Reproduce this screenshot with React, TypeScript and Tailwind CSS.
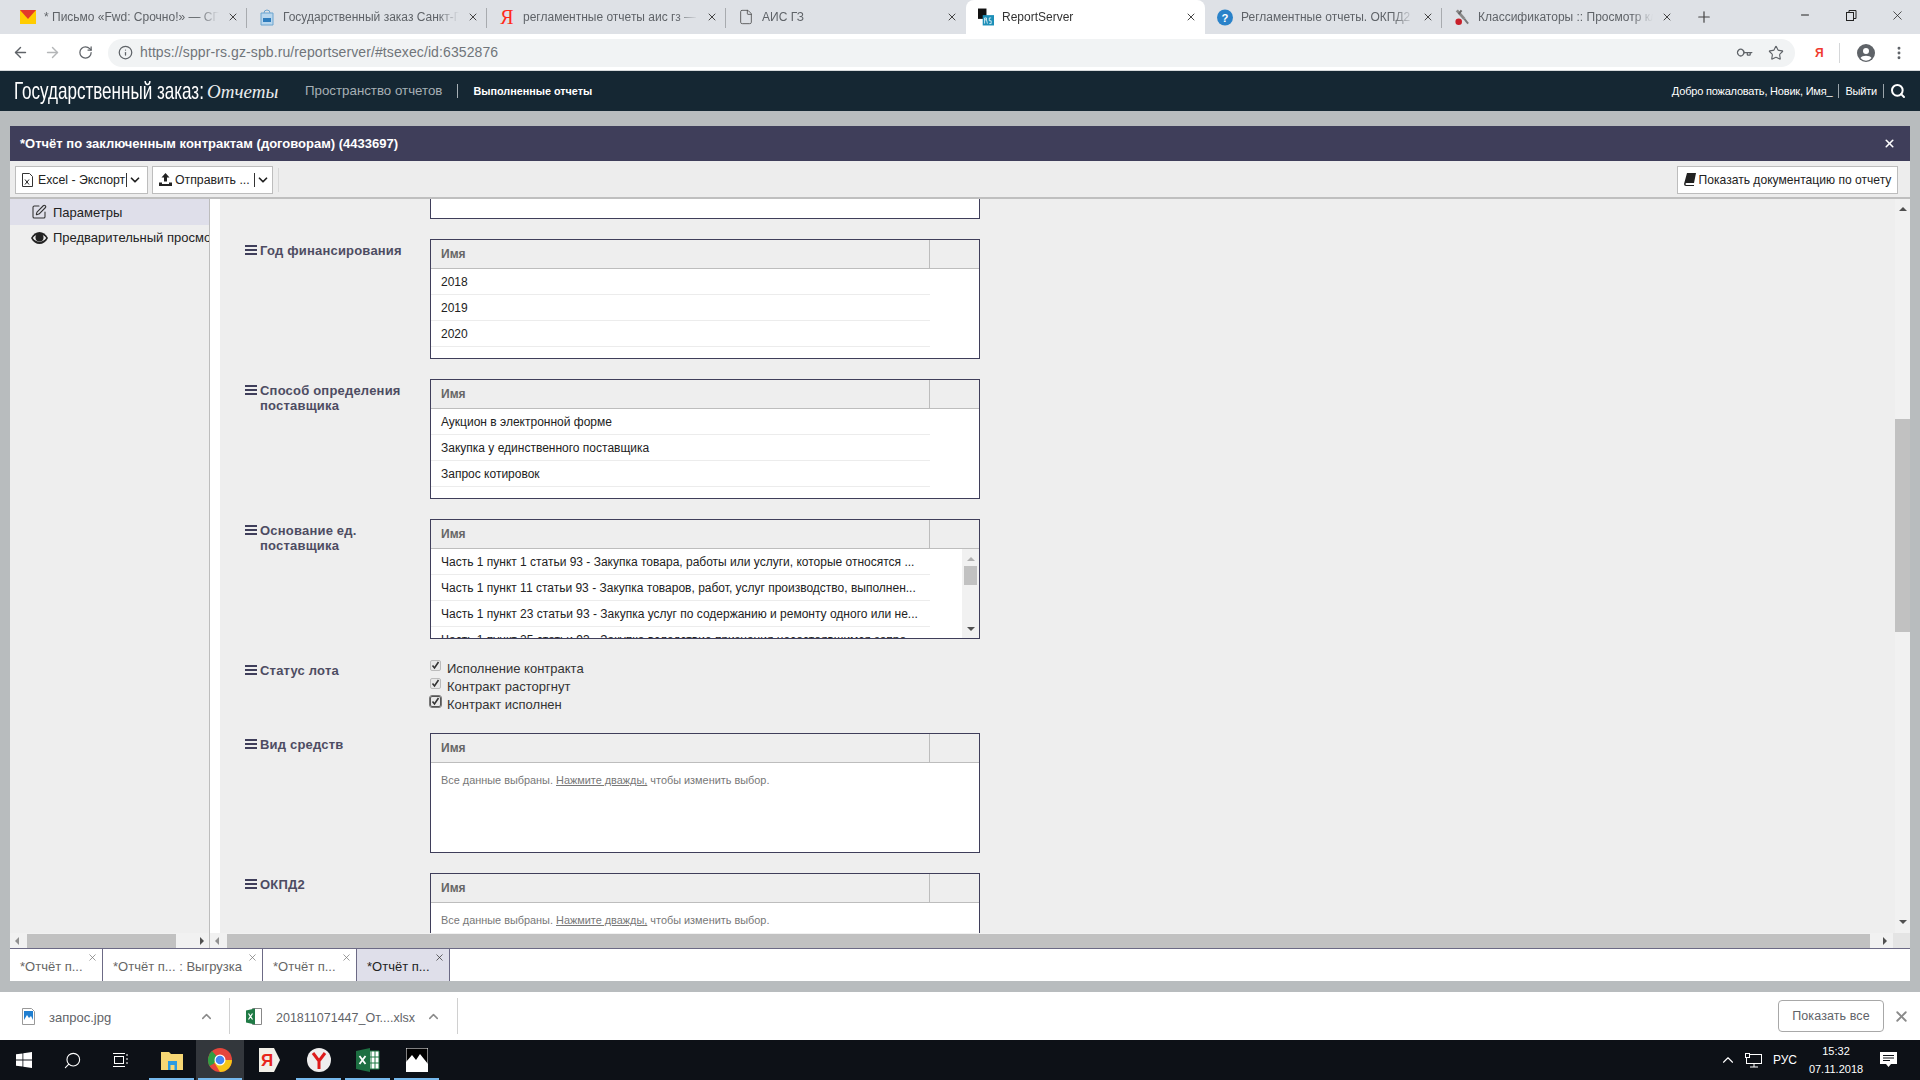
import React from "react";
import { ArrowLeft, ArrowRight, RotateCw, Info, Star, Plus, X, Minus, Search, ChevronUp, ChevronDown, SquarePen, Key, MoreVertical, File } from "lucide-react";

const font = "font-['Liberation_Sans',Arial,sans-serif]";

function Fav({ kind }: { kind: string }) {
  if (kind === "mail") return <svg width="16" height="14" viewBox="0 0 16 14"><rect width="16" height="14" fill="#ffcc00" /><path d="M0 0h16L8 9z" fill="#e3392a" /></svg>;
  if (kind === "gz") return <svg width="16" height="18" viewBox="0 0 16 18"><path d="M2 5h12v12H2z" fill="#b9d7ee" stroke="#6ba4cf" /><path d="M5 5a3 3 0 0 1 6 0" fill="none" stroke="#6ba4cf" /><rect x="4" y="10" width="8" height="4" fill="#2f7dbd" /></svg>;
  if (kind === "ya") return <span className="text-[20px] leading-none text-[#ff2a1a] font-['Liberation_Serif',serif]">Я</span>;
  if (kind === "doc") return <File size={16} strokeWidth={1.2} className="text-[#444]" />;
  if (kind === "rs") return <svg width="17" height="18" viewBox="0 0 17 18"><rect x="0" y="0" width="9" height="11" fill="#111" /><rect x="5" y="7" width="12" height="11" fill="#1c8fb8" /><path d="M7 10v6M7 10h2v2H7M9 12l1 4M14 10h-2v3h2v3h-2" fill="none" stroke="#fff" strokeWidth=".8" /></svg>;
  if (kind === "q") return <svg width="17" height="17" viewBox="0 0 17 17"><circle cx="8.5" cy="8.5" r="8.5" fill="#2a82c9" /><text x="8.5" y="13" textAnchor="middle" fontSize="12" fontWeight="700" fill="#fff" fontFamily="Liberation Sans">?</text></svg>;
  return <svg width="17" height="18" viewBox="0 0 17 18"><path d="M3 2l8 9" stroke="#888" strokeWidth="3" /><path d="M8 2l-3 4" stroke="#666" strokeWidth="2" /><circle cx="5" cy="14" r="3.5" fill="#c8202a" /><path d="M11 11l4 5" stroke="#777" strokeWidth="2" /></svg>;
}

const tabs = [
  { t: "* Письмо «Fwd: Срочно!» — СПб", k: "mail", w: "w-[239px]" },
  { t: "Государственный заказ Санкт-Петербург", k: "gz", w: "w-[240px]" },
  { t: "регламентные отчеты аис гз — Яндекс", k: "ya", w: "w-[239px]" },
  { t: "АИС ГЗ", k: "doc", w: "w-[240px]" },
  { t: "ReportServer", k: "rs", w: "w-[239px]", active: true },
  { t: "Регламентные отчеты. ОКПД2 и ОКВЭД", k: "q", w: "w-[237px]" },
  { t: "Классификаторы :: Просмотр классификатора", k: "cl", w: "w-[239px]" },
];

function TabStrip() {
  return (
    <div className="flex h-[34px] bg-[#dee1e6] pl-2 items-stretch">
      {tabs.map((t, i) => (
        <div key={i} className={`${t.w} flex items-center pl-3 pr-2 gap-2 relative ${t.active ? "bg-white rounded-t-lg" : ""}`}>
          <span className="w-4 h-[18px] flex items-center justify-center shrink-0"><Fav kind={t.k} /></span>
          <span className={`flex-1 min-w-0 overflow-hidden whitespace-nowrap text-[12px] ${t.active ? "text-[#333]" : "text-[#5f6368]"} [mask-image:linear-gradient(90deg,#000_88%,transparent)]`}>{t.t}</span>
          <X size={12} strokeWidth={2} className="text-[#444] shrink-0" />
          {i !== 3 && i !== 4 && i !== 6 && <span className="absolute right-0 top-2 h-[20px] w-px bg-[#a8abaf]" />}
        </div>
      ))}
      <div className="w-[46px] flex items-center justify-center"><Plus size={18} strokeWidth={1.6} className="text-[#444]" /></div>
      <div className="flex-1 flex items-start justify-end text-[#222]">
        <div className="w-[46px] h-[30px] flex items-center justify-center"><Minus size={12} /></div>
        <div className="w-[46px] h-[30px] flex items-center justify-center">
          <svg width="11" height="11" viewBox="0 0 11 11" fill="none" stroke="#222"><rect x=".5" y="2.5" width="7" height="8" /><path d="M3 2.5V.5h7v8H7.5" /></svg>
        </div>
        <div className="w-[46px] h-[30px] flex items-center justify-center"><X size={15} strokeWidth={1.2} /></div>
      </div>
    </div>
  );
}

function AddressBar() {
  return (
    <div className="h-[36px] bg-white flex items-center pl-3 pt-[1px] pr-2">
      <ArrowLeft size={17} strokeWidth={2} className="text-[#5f6368] shrink-0" />
      <ArrowRight size={17} strokeWidth={2} className="text-[#b4b6b8] ml-[15px] shrink-0" />
      <RotateCw size={15} strokeWidth={2} className="text-[#5f6368] ml-[17px] shrink-0" />
      <div className="ml-[15px] w-[1687px] shrink-0 h-[28px] bg-[#f1f3f4] rounded-full flex items-center pl-[10px] pr-[11px]">
        <Info size={15} strokeWidth={2} className="text-[#5f6368]" />
        <span className="ml-[7px] text-[14px] text-[#70757a] tracking-[0.1px]">https://sppr-rs.gz-spb.ru/reportserver/#tsexec/id:6352876</span>
        <span className="flex-1" />
        <Key size={14} strokeWidth={2.2} className="text-[#5f6368] rotate-45 mr-[17px]" />
        <Star size={16} strokeWidth={1.7} className="text-[#5f6368]" />
      </div>
      <span className="ml-[20px] text-[12px] font-bold text-[#f03a2e]">Я</span>
      <span className="ml-[15px] h-[20px] w-px bg-[#d5d7d9]" />
      <svg className="ml-[17px] shrink-0" width="18" height="18" viewBox="0 0 18 18"><circle cx="9" cy="9" r="9" fill="#5f6368" /><circle cx="9" cy="7" r="3" fill="#fff" /><path d="M3.5 14c1.5-3 9.500-3 11 0a7 7 0 0 1-11 0z" fill="#fff" /></svg>
      <MoreVertical size={16} strokeWidth={2.4} className="ml-[16px] text-[#5f6368] shrink-0" />
    </div>
  );
}

function AppHeader() {
  return (
    <div className="h-[41px] bg-[#152733] border-t border-[#d6d9db] flex items-center pl-[14px] pr-[14px] text-white">
      <span className="text-[24px] leading-none w-[190px] whitespace-nowrap origin-left scale-x-[0.71] inline-block">Государственный заказ:</span>
      <span className="ml-[3px] mt-0.5 w-[98px] text-[19px] italic font-['Liberation_Serif',serif] text-[#e8ecee] whitespace-nowrap">Отчеты</span>
      <span className="text-[13.300px] text-[#a7b0b6] whitespace-nowrap">Пространство отчетов</span>
      <span className="ml-[15px] h-[14px] w-px bg-[#a7b0b6]" />
      <span className="ml-[15px] text-[10.800px] font-bold whitespace-nowrap">Выполненные отчеты</span>
      <span className="flex-1" />
      <span className="text-[11px] tracking-[-0.2px]">Добро пожаловать, Новик, Имя_</span>
      <span className="mx-[6px] h-[14px] w-px bg-[#9aa4aa]" />
      <span className="text-[11px] tracking-[-0.2px]">Выйти</span>
      <span className="mx-[6px] h-[14px] w-px bg-[#9aa4aa]" />
      <Search size={16} strokeWidth={3} />
    </div>
  );
}

function XlsIcon() {
  return <svg className="shrink-0" width="11" height="14" viewBox="0 0 11 14"><path d="M.5.500h7l3 3v10H.5z" fill="#fff" stroke="#333" /><path d="M3 6.500l4 5M7 6.500l-4 5" stroke="#222" /></svg>;
}
function UploadIcon() {
  return <svg className="shrink-0" width="13" height="13" viewBox="0 0 13 13" fill="#222"><path d="M6.500 0l4 4.500H8v4H5v-4H2.500z" /><path d="M0 9.500h3v1.500h7V9.500h3V13H0z" /></svg>;
}
function BookIcon() {
  return <svg className="shrink-0" width="12" height="13" viewBox="0 0 12 13" fill="#222"><path d="M3 0h9l-2 10H2.500a1 1 0 0 0 0 2H10v1H2a2 2 0 0 1-2-2z" /></svg>;
}
function EyeIcon() {
  return <svg className="shrink-0" width="17" height="12" viewBox="0 0 17 12"><path d="M0 6c4-8 13-8 17 0-4 8-13 8-17 0z" fill="#222" /><path d="M1.800 6c3.500-5 10-5 13.400 0-3.400 5-9.900 5-13.400 0z" fill="#eee" /><circle cx="8.500" cy="5.500" r="4" fill="#222" /></svg>;
}
function BarsIcon() {
  return <svg className="mt-[2px] shrink-0" width="12" height="10" viewBox="0 0 12 10" fill="#3f3e5a"><rect width="12" height="2" /><rect y="4" width="12" height="2" /><rect y="8" width="12" height="2" /></svg>;
}

function Toolbar() {
  return (
    <div className="h-[38px] bg-[#ededed] border-b-2 border-[#bfbfbf] flex items-center pl-[5px] pr-[12px] pt-[1px]">
      <div className="w-[133px] h-[28px] bg-white border border-[#bdbdbd] flex items-center pl-[6px] text-[12.300px] leading-[18px] text-[#222] whitespace-nowrap">
        <XlsIcon />
        <span className="ml-[5px] mt-[1px]">Excel - Экспорт</span>
        <span className="ml-[1px] h-[14px] w-px bg-[#333]" />
        <ChevronDown size={14} strokeWidth={3} className="ml-[1px] text-[#222]" />
      </div>
      <div className="w-[4px]" />
      <div className="w-[121px] h-[28px] bg-white border border-[#bdbdbd] flex items-center pl-[6px] text-[12.300px] leading-[18px] text-[#222] whitespace-nowrap">
        <UploadIcon />
        <span className="ml-[3px] mt-[1px] w-[78px]">Отправить ...</span>
        <span className="ml-[1px] h-[14px] w-px bg-[#333]" />
        <ChevronDown size={14} strokeWidth={3} className="ml-[1px] text-[#222]" />
      </div>
      <span className="ml-[5px] h-[24px] w-px bg-[#d8d8d8]" />
      <span className="flex-1" />
      <div className="w-[221px] h-[28px] bg-white border border-[#bdbdbd] flex items-center justify-center gap-[3px] text-[12.100px] leading-[18px] text-[#222] whitespace-nowrap">
        <BookIcon />
        <span className="mt-[1px]">Показать документацию по отчету</span>
      </div>
    </div>
  );
}

function Sidebar() {
  return (
    <div className="w-[200px] bg-[#eeeeee] border-r border-[#bdbdbd] overflow-hidden shrink-0 text-[13px] text-[#222] whitespace-nowrap">
      <div className="h-[26px] bg-[#dfdfea] flex items-center pl-[21px] gap-[6px]">
        <SquarePen size={16} strokeWidth={1.6} className="text-[#333] shrink-0" />
        <span className="mt-[1px]">Параметры</span>
      </div>
      <div className="h-[25px] flex items-center pl-[21px] gap-[5px]">
        <EyeIcon />
        <span>Предварительный просмотр</span>
      </div>
    </div>
  );
}

function FormLabel({ children }: { children: React.ReactNode }) {
  return (
    <div className="w-[185px] shrink-0 flex items-start gap-[3px] pt-[4px] text-[13px] font-bold leading-[15px] text-[#4d4c62] tracking-[0.2px]">
      <BarsIcon />
      <div className="w-[150px]">{children}</div>
    </div>
  );
}

function TableHead() {
  return (
    <div className="h-[29px] bg-[#eeeeee] border-b border-[#bdbdbd] flex text-[12px] font-bold text-[#666] shrink-0">
      <div className="w-[499px] border-r border-[#bdbdbd] pl-[10px] flex items-center">Имя</div>
    </div>
  );
}

function ListTable({ rows }: { rows: string[] }) {
  return (
    <div className="w-[550px] h-[120px] border border-[#3f3e5a] bg-white flex flex-col">
      <TableHead />
      {rows.map((r) => (
        <div key={r} className="h-[26px] w-[499px] border-b border-[#ececec] pl-[10px] flex items-center text-[12px] text-[#222] shrink-0">{r}</div>
      ))}
    </div>
  );
}

function ScrollTable() {
  const rows = [
    "Часть 1 пункт 1 статьи 93 - Закупка товара, работы или услуги, которые относятся ...",
    "Часть 1 пункт 11 статьи 93 - Закупка товаров, работ, услуг производство, выполнен...",
    "Часть 1 пункт 23 статьи 93 - Закупка услуг по содержанию и ремонту одного или не...",
    "Часть 1 пункт 25 статьи 93 - Закупка вследствие признания несостоявшимся запро...",
  ];
  return (
    <div className="w-[550px] h-[120px] border border-[#3f3e5a] bg-white flex flex-col overflow-hidden relative">
      <TableHead />
      {rows.map((r) => (
        <div key={r} className="h-[26px] w-[499px] border-b border-[#ececec] pl-[10px] flex items-center text-[12px] text-[#222] shrink-0 whitespace-nowrap overflow-hidden">{r}</div>
      ))}
      <div className="absolute right-0 top-[29px] bottom-0 w-[17px] bg-[#f1f1f1] flex flex-col items-center">
        <div className="mt-[8px] w-0 h-0 border-x-[4px] border-x-transparent border-b-[4px] border-b-[#b0b0b0]" />
        <div className="mt-[5px] w-[13px] h-[19px] bg-[#c1c1c1]" />
        <div className="mt-auto mb-[7px] w-0 h-0 border-x-[4px] border-x-transparent border-t-[4px] border-t-[#505050]" />
      </div>
    </div>
  );
}

function EmptyTable() {
  return (
    <div className="w-[550px] h-[120px] border border-[#3f3e5a] bg-white shrink-0">
      <TableHead />
      <div className="pl-[10px] pt-[11px] text-[10.900px] leading-[13px] text-[#777]">
        Все данные выбраны. <span className="underline">Нажмите дважды,</span> чтобы изменить выбор.
      </div>
    </div>
  );
}

function Check({ label, focus }: { label: string; focus?: boolean }) {
  return (
    <div className="h-[18px] flex items-start gap-[6px] text-[13px] leading-[20px] text-[#333]">
      <span className={`mt-[1px] w-[11px] h-[11px] rounded-[2px] bg-[#e8e8e8] flex items-center justify-center border ${focus ? "border-[#555] outline outline-1 outline-[#777]" : "border-[#bbb]"}`}>
        <svg width="9" height="9" viewBox="0 0 9 9"><path d="M1.500 4.500l2 2.500L7.500 1" fill="none" stroke="#333" strokeWidth="1.600" /></svg>
      </span>
      <span>{label}</span>
    </div>
  );
}

function FormPanel() {
  return (
    <div className="flex-1 bg-[#eeeeee] overflow-hidden flex flex-col pl-[25px] gap-[20px] relative">
      <div className="flex shrink-0">
        <div className="w-[185px]" />
        <div className="w-[550px] h-[20px] bg-white border border-t-0 border-[#3f3e5a]" />
      </div>
      <div className="flex shrink-0"><FormLabel>Год финансирования</FormLabel><ListTable rows={["2018", "2019", "2020"]} /></div>
      <div className="flex shrink-0"><FormLabel>Способ определения поставщика</FormLabel><ListTable rows={["Аукцион в электронной форме", "Закупка у единственного поставщика", "Запрос котировок"]} /></div>
      <div className="flex shrink-0"><FormLabel>Основание ед. поставщика</FormLabel><ScrollTable /></div>
      <div className="flex shrink-0 h-[54px]">
        <FormLabel>Статус лота</FormLabel>
        <div className="flex flex-col"><Check label="Исполнение контракта" /><Check label="Контракт расторгнут" /><Check label="Контракт исполнен" focus /></div>
      </div>
      <div className="flex shrink-0"><FormLabel>Вид средств</FormLabel><EmptyTable /></div>
      <div className="flex shrink-0"><FormLabel>ОКПД2</FormLabel><EmptyTable /></div>
    </div>
  );
}

function VScroll() {
  return (
    <div className="w-[15px] bg-[#f1f1f1] flex flex-col items-center shrink-0">
      <div className="mt-[8px] w-0 h-0 border-x-[4px] border-x-transparent border-b-[4px] border-b-[#505050]" />
      <div className="mt-[208px] w-full h-[213px] bg-[#c1c1c1]" />
      <div className="mt-auto mb-[9px] w-0 h-0 border-x-[4px] border-x-transparent border-t-[4px] border-t-[#505050]" />
    </div>
  );
}

function HScrolls() {
  return (
    <div className="h-[16px] flex bg-[#f1f1f1] border-b border-[#6c6a85] shrink-0">
      <div className="w-[200px] flex items-center border-r border-[#bdbdbd]">
        <div className="ml-[5px] w-0 h-0 border-y-[4px] border-y-transparent border-r-[4px] border-r-[#909090]" />
        <div className="ml-[8px] w-[149px] h-[14px] bg-[#c1c1c1]" />
        <div className="ml-auto mr-[5px] w-0 h-0 border-y-[4px] border-y-transparent border-l-[4px] border-l-[#505050]" />
      </div>
      <div className="flex-1 flex items-center">
        <div className="ml-[5px] w-0 h-0 border-y-[4px] border-y-transparent border-r-[4px] border-r-[#909090]" />
        <div className="ml-[8px] w-[1643px] h-[14px] bg-[#c1c1c1]" />
        <div className="ml-[13px] w-0 h-0 border-y-[4px] border-y-transparent border-l-[4px] border-l-[#505050]" />
      </div>
      <div className="w-[17px] bg-[#e4e4e4]" />
    </div>
  );
}

function BottomTab({ label, w, active }: { label: string; w: string; active?: boolean }) {
  return (
    <div className={`${w} h-full border-r border-[#6c6a85] relative pl-[10px] pt-[10px] text-[13px] leading-[15px] whitespace-nowrap ${active ? "bg-[#dfdfea] text-[#222]" : "text-[#666]"}`}>
      {label}
      <X size={11} strokeWidth={1.6} className={`absolute right-[4px] top-[3px] ${active ? "text-[#333]" : "text-[#777]"}`} />
    </div>
  );
}

function Report() {
  return (
    <div className="mx-[10px] mt-[15px] flex flex-col h-[855px]">
      <div className="h-[35px] bg-[#3f3e5a] flex items-center pl-[10px] pr-[14px] text-[13px] font-bold text-white shrink-0">
        <span>*Отчёт по заключенным контрактам (договорам) (4433697)</span>
        <span className="flex-1" />
        <X size={13} strokeWidth={3} />
      </div>
      <Toolbar />
      <div className="flex h-[734px] shrink-0">
        <Sidebar />
        <div className="w-[10px] bg-white shrink-0" />
        <FormPanel />
        <VScroll />
      </div>
      <HScrolls />
      <div className="flex-1 bg-white flex">
        <BottomTab w="w-[93px]" label="*Отчёт п..." />
        <BottomTab w="w-[160px]" label="*Отчёт п... : Выгрузка" />
        <BottomTab w="w-[94px]" label="*Отчёт п..." />
        <BottomTab w="w-[93px]" label="*Отчёт п..." active />
      </div>
    </div>
  );
}

function DownloadBar() {
  return (
    <div className="h-[48px] bg-white flex items-center text-[13px] text-[#5f6368] relative">
      <div className="w-[230px] h-[36px] flex items-center border-r border-[#d0d0d0] pl-[22px]">
        <svg width="13" height="17" viewBox="0 0 13 17"><path d="M.5.5h9l3 3v13H.5z" fill="#fff" stroke="#999" /><rect x="2" y="3" width="9" height="9" fill="#1f7ed0" /><path d="M2 12l3-5 2 3 2-2 2 4z" fill="#fff" /></svg>
        <span className="ml-[14px] w-[150px] mt-[4px]">запрос.jpg</span>
        <ChevronUp size={15} strokeWidth={2.4} className="text-[#8a8a8a]" />
      </div>
      <div className="w-[228px] h-[36px] flex items-center border-r border-[#d0d0d0] pl-[16px]">
        <svg width="16" height="17" viewBox="0 0 16 17"><path d="M6.500.5h9v16h-9z" fill="#fff" stroke="#888" /><path d="M0 2.500l9-2v16l-9-2z" fill="#1f7a45" /><path d="M2.500 5.500l4 6M6.500 5.500l-4 6" stroke="#fff" strokeWidth="1.200" /></svg>
        <span className="ml-[14px] w-[150px] mt-[4px] whitespace-nowrap text-[12.500px]">201811071447_От....xlsx</span>
        <ChevronUp size={15} strokeWidth={2.4} className="text-[#8a8a8a]" />
      </div>
      <span className="flex-1" />
      <div className="w-[106px] h-[32px] border border-[#a8a8a8] rounded-[4px] flex items-center justify-center text-[12.500px] text-[#5f6368] tracking-[0.1px]">Показать все</div>
      <X size={17} strokeWidth={2.6} className="ml-[9px] mr-[10px] text-[#8a8a8a]" />
    </div>
  );
}

function TaskIcon({ children, w = "w-[48px]", on, hi }: { children: React.ReactNode; w?: string; on?: boolean; hi?: boolean }) {
  return (
    <div className={`${w} h-full flex items-center justify-center relative ${hi ? "bg-[#33373c]" : ""}`}>
      {children}
      {on && <span className="absolute bottom-0 left-[2px] right-[2px] h-[2px] bg-[#76b9ed]" />}
    </div>
  );
}

function Taskbar() {
  return (
    <div className="h-[40px] bg-[#0d1117] flex items-center text-white">
      <TaskIcon>
        <svg width="16" height="16" viewBox="0 0 16 16" fill="#fff"><path d="M0 2.300l6.500-.9v6.200H0zM7.300 1.300L16 0v7.600H7.300zM0 8.400h6.500v6.200L0 13.700zM7.300 8.400H16V16l-8.700-1.300z" /></svg>
      </TaskIcon>
      <TaskIcon><Search size={19} strokeWidth={1.4} className="-scale-x-100" /></TaskIcon>
      <TaskIcon>
        <svg width="17" height="16" viewBox="0 0 17 16" fill="none" stroke="#fff"><rect x="2.500" y="4.500" width="9" height="7" /><path d="M1 1.500h12M1 14.500h12M15 2v2M15 6v2M15 10v2" /></svg>
      </TaskIcon>
      <div className="w-[3px]" />
      <TaskIcon w="w-[49px]" on>
        <svg width="22" height="20" viewBox="0 0 22 20"><path d="M0 2h8l2 2h12v16H0z" fill="#f7d774" /><rect x="7" y="11" width="9" height="9" fill="#2b9be0" /><rect x="9.500" y="15" width="4" height="5" fill="#f7d774" /></svg>
      </TaskIcon>
      <TaskIcon w="w-[48px]" on hi>
        <svg width="24" height="24" viewBox="0 0 24 24"><circle cx="12" cy="12" r="12" fill="#e4463c" /><path d="M12 12L1.600 18A12 12 0 0 1 4 3z" fill="#2f9e44" /><path d="M12 12h12a12 12 0 0 1-12 12L6 14z" fill="#f5c518" /><circle cx="12" cy="12" r="5.500" fill="#fff" /><circle cx="12" cy="12" r="4.300" fill="#4285f4" /></svg>
      </TaskIcon>
      <TaskIcon w="w-[50px]">
        <svg width="24" height="26" viewBox="0 0 24 26"><path d="M2 1h15l6 12-6 12H2z" fill="#f2f0e8" /><text x="10" y="19" textAnchor="middle" fontSize="17" fontWeight="700" fill="#e8261c" fontFamily="Liberation Sans">Я</text></svg>
      </TaskIcon>
      <TaskIcon w="w-[49px]" on>
        <svg width="24" height="24" viewBox="0 0 24 24"><circle cx="12" cy="12" r="12" fill="#eeeeee" /><path d="M6 5l6 8 6-8M12 13v8" fill="none" stroke="#dd1c1c" strokeWidth="3" /></svg>
      </TaskIcon>
      <TaskIcon w="w-[49px]" on>
        <svg width="24" height="24" viewBox="0 0 24 24"><path d="M11 3h12v18H11z" fill="#fff" stroke="#1f7a45" /><path d="M15 3v18M19 3v18M11 9h12M11 15h12" stroke="#1f7a45" /><path d="M0 3l14-3v24L0 21z" fill="#1d6f42" /><path d="M3.500 8l6 8M9.500 8l-6 8" stroke="#fff" strokeWidth="1.800" /></svg>
      </TaskIcon>
      <TaskIcon w="w-[49px]" on>
        <svg width="22" height="24" viewBox="0 0 22 24"><rect width="22" height="24" fill="#000" stroke="#fff" /><path d="M0 24V14l6-7 4 5 4-6 8 10v8z" fill="#fff" /></svg>
      </TaskIcon>
      <span className="flex-1" />
      <ChevronUp size={18} strokeWidth={1.5} />
      <svg className="ml-[8px]" width="17" height="15" viewBox="0 0 17 15" fill="none" stroke="#fff"><rect x="1.500" y="1.500" width="15" height="9" /><path d="M9 10.500V14M5 14h8" /><rect x=".5" y=".5" width="4" height="4" fill="#0d1117" /></svg>
      <span className="ml-[11px] text-[12px]">РУС</span>
      <div className="ml-[11px] w-[56px] text-center text-[11px] leading-[18px]">
        <div>15:32</div>
        <div>07.11.2018</div>
      </div>
      <div className="ml-[16px] mr-[23px]">
        <svg width="17" height="16" viewBox="0 0 17 16"><path d="M0 0h17v12h-6l-2.500 3L6 12H0z" fill="#fff" /><path d="M3 3.500h11M3 6h11M3 8.500h7" stroke="#0d1117" /></svg>
      </div>
    </div>
  );
}

export default function App() {
  return (
    <div className={`w-[1920px] h-[1080px] overflow-hidden flex flex-col bg-[#b8bcbe] ${font}`}>
      <TabStrip />
      <AddressBar />
      <AppHeader />
      <Report />
      <div className="h-[11px]" />
      <DownloadBar />
      <Taskbar />
    </div>
  );
}
